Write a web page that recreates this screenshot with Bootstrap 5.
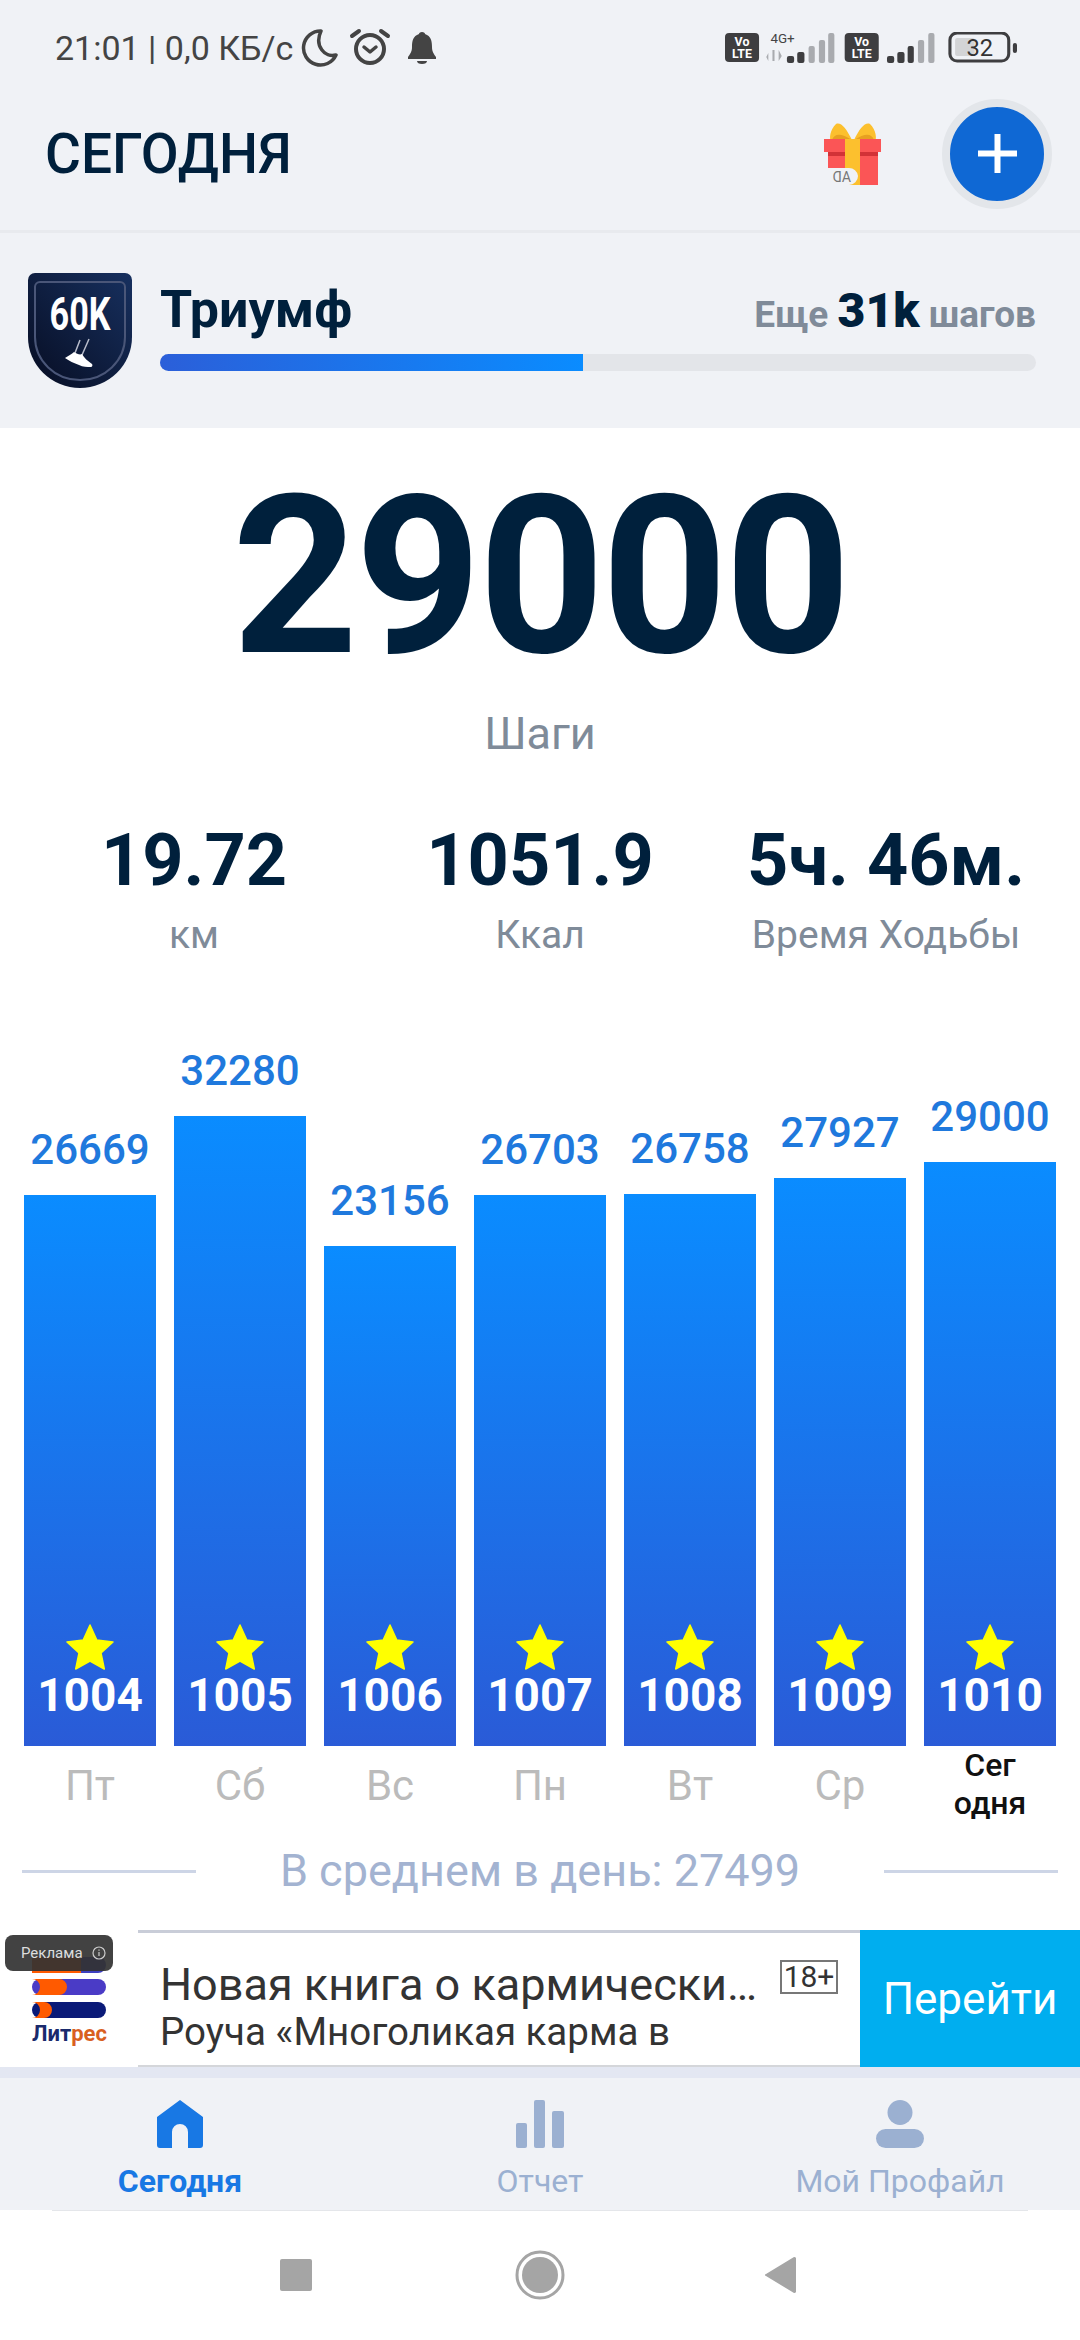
<!DOCTYPE html>
<html lang="ru">
<head>
    <meta charset="UTF-8">
    <meta name="viewport" content="width=device-width, initial-scale=1.0">
    <title>Шаги</title>
    <link href="https://cdn.jsdelivr.net/npm/bootstrap@5.3.0/dist/css/bootstrap.min.css" rel="stylesheet">
    <style>
        html, body { margin: 0; height: 2340px; overflow: hidden; }
        body { width: 1080px; background: #fff; font-family: Roboto, "Liberation Sans", sans-serif; color: #00203c; }
        svg { display: block; }

        .status-bar { height: 80px; background: #f0f2f6; padding: 26px 63px 0 55px; }
        .status-time { font-size: 34px; line-height: 44px; color: #444; white-space: nowrap; }
        .app-head { height: 153px; background: #f0f2f6; border-bottom: 3px solid #e8eaee; padding: 0 28px 3px 45px; }
        .app-title { font-size: 55px; font-weight: 500; margin: 0; line-height: 1.2; }
        .add-btn { width: 110px; height: 110px; border-radius: 50%; background: #0f68d4; border: 8px solid #e3e6ea; padding: 0; }

        .goal-box { height: 195px; background: #f0f2f6; padding: 40px 44px 0 28px; }
        .goal-name { font-size: 52px; font-weight: 700; line-height: 60px; }
        .goal-left { font-size: 37px; font-weight: 700; color: #808b99; line-height: 60px; }
        .goal-left b { font-size: 48px; color: #00203c; }
        .goal-track { height: 17px; border-radius: 9px; background: #e3e5e9; margin-top: 9px; overflow: hidden; }
        .goal-fill { height: 100%; background: linear-gradient(90deg, #2b5fd9, #0a8cff); }

        .main-area { height: 1502px; background: #fff; }
        .big-steps { font-size: 220px; font-weight: 700; line-height: 260px; text-align: center; padding-top: 19px; letter-spacing: -3px; }
        .steps-cap { font-size: 45px; color: #7f8b99; text-align: center; line-height: 54px; }
        .stat-row { margin-top: 58px; }
        .stat-item { text-align: center; }
        .stat-val { font-size: 72px; font-weight: 700; line-height: 84px; white-space: nowrap; }
        .stat-cap { font-size: 39px; color: #7f8b99; line-height: 46px; margin-top: 9px; white-space: nowrap; }

        .chart-row { height: 788px; padding: 0 24px; gap: 18px; }
        .chart-col { width: 132px; }
        .bar-num { font-size: 42px; font-weight: 500; color: #1f79dd; line-height: 50px; text-align: center; margin-bottom: 20px; }
        .bar-fill { background: linear-gradient(180deg, #0a8cff, #2a5bd7); padding-bottom: 26px; }
        .bar-id { font-size: 46px; font-weight: 700; color: #fff; line-height: 50px; text-align: center; }
        .day-row { height: 80px; padding: 0 24px; gap: 18px; }
        .day-name { width: 132px; font-size: 42px; color: #bbb; text-align: center; line-height: 50px; padding-top: 15px; }
        .day-name.now { font-size: 32px; font-weight: 500; color: #111; line-height: 38px; padding-top: 0; }

        .avg-row { padding: 0 22px; margin-top: 20px; }
        .avg-line { height: 3px; width: 174px; background: #cdd5e6; }
        .avg-text { font-size: 45px; color: #a3b3d1; line-height: 50px; }

        .ad-box { height: 137px; background: #fff; position: relative; }
        .ad-logo { width: 138px; flex: none; padding: 27px 0 0 32px; }
        .ad-body { border-top: 3px solid #c9cdd8; border-bottom: 2px solid #d4d6da; padding: 28px 0 0 22px; min-width: 0; }
        .ad-title { font-size: 45px; line-height: 48px; color: #333; white-space: nowrap; }
        .ad-sub { font-size: 38.500px; line-height: 44px; margin-top: 1px; color: #333; white-space: nowrap; }
        .ad-age { position: absolute; left: 780px; top: 30px; width: 58px; height: 34px; border: 2px solid #777; font-size: 30px; line-height: 30px; text-align: center; color: #333; }
        .ad-go { width: 220px; flex: none; background: #00aeef; color: #fff; font-size: 44px; border: 0; border-radius: 0; padding: 0; }
        .ad-go:hover { background: #00aeef; color: #fff; }
        .ad-tag { position: absolute; left: 5px; top: 5px; width: 108px; height: 36px; border-radius: 8px; background: rgba(50,50,50,.92); color: #ddd; font-size: 15px; padding: 0 0 0 16px; gap: 9px; }

        .tab-band { height: 11px; background: #e3e7f2; }
        .tab-bar { height: 132px; background: #f0f2f6; padding-top: 22px; }
        .tab-item { color: #9bb0d1; text-align: center; font-size: 32px; line-height: 36px; }
        .tab-item svg { margin: 0 auto 15px; }
        .tab-item.on { color: #1878e4; font-weight: 700; }
        .tab-rule { height: 1px; background: #e4e6ea; margin: 0 52px; }
        .sys-nav { height: 129px; background: #fff; padding-bottom: 1px; }
    </style>
</head>
<body>

    <div class="status-bar d-flex justify-content-between">
        <div class="d-flex align-items-start">
            <span class="status-time">21:01 | 0,0 КБ/с</span>
            <svg class="ms-2" width="137" height="44" viewBox="0 0 137 44" fill="none">
                <path d="M20 5a17 17 0 1 0 15 24c-11 3-22-9-15-24z" stroke="#444" stroke-width="3.500" stroke-linejoin="round"/>
                <circle cx="69" cy="23" r="14" stroke="#444" stroke-width="4"/>
                <path d="M51 10l7-5M87 10l-7-5" stroke="#444" stroke-width="4" stroke-linecap="round"/>
                <path d="M63 21l6 5 6-5" stroke="#444" stroke-width="3.500" stroke-linecap="round" stroke-linejoin="round"/>
                <path d="M121 6c2 0 3 1 3 2 6 2 7 7 7 13 0 5 2 7 4 10v2h-28v-2c2-3 4-5 4-10 0-6 1-11 7-13 0-1 1-2 3-2z" fill="#444"/>
                <path d="M116 35h10c0 2-2 3-5 3s-5-1-5-3z" fill="#444"/>
            </svg>
        </div>
        <svg width="292" height="36" viewBox="0 0 283 36" preserveAspectRatio="none" style="margin-top:6px">
            <rect x="0" y="1" width="33" height="29" rx="4" fill="#3e3e40"/>
            <text x="16.500" y="14" font-size="12" font-weight="700" fill="#fff" text-anchor="middle" font-family="Roboto">Vo</text>
            <text x="16.500" y="26" font-size="12" font-weight="700" fill="#fff" text-anchor="middle" font-family="Roboto">LTE</text>
            <text x="44" y="11" font-size="13" fill="#444" font-family="Roboto">4G+</text>
            <path d="M42 21l-2 4 2 4zM46 18v11h2v-11zM52 18v11l3-5z" fill="#a9abaf"/>
            <rect x="60" y="24" width="7" height="7" rx="2" fill="#3e3e40"/>
            <rect x="70" y="20" width="7" height="11" rx="2" fill="#3e3e40"/>
            <rect x="81" y="14" width="6" height="17" rx="2" fill="#a9abaf"/>
            <rect x="91" y="8" width="6" height="23" rx="2" fill="#a9abaf"/>
            <rect x="100" y="1" width="6" height="30" rx="2" fill="#a9abaf"/>
            <rect x="116" y="1" width="33" height="29" rx="4" fill="#3e3e40"/>
            <text x="132.500" y="14" font-size="12" font-weight="700" fill="#fff" text-anchor="middle" font-family="Roboto">Vo</text>
            <text x="132.500" y="26" font-size="12" font-weight="700" fill="#fff" text-anchor="middle" font-family="Roboto">LTE</text>
            <rect x="157" y="24" width="7" height="7" rx="2" fill="#3e3e40"/>
            <rect x="167" y="20" width="7" height="11" rx="2" fill="#3e3e40"/>
            <rect x="177" y="14" width="6" height="17" rx="2" fill="#3e3e40"/>
            <rect x="187" y="8" width="6" height="23" rx="2" fill="#a9abaf"/>
            <rect x="197" y="1" width="6" height="30" rx="2" fill="#a9abaf"/>
            <rect x="218" y="1" width="57" height="28" rx="7" fill="none" stroke="#3e3e40" stroke-width="3"/>
            <rect x="223" y="6" width="19" height="18" rx="2" fill="#d3d4d6"/>
            <text x="247" y="24" font-size="23" fill="#333" text-anchor="middle" font-family="Roboto">32</text>
            <rect x="279" y="11" width="4" height="10" rx="2" fill="#3e3e40"/>
        </svg>
    </div>

    <div class="app-head d-flex align-items-center justify-content-between">
        <h1 class="app-title">СЕГОДНЯ</h1>
        <div class="d-flex align-items-center">
            <svg width="58" height="64" viewBox="0 0 58 64" style="margin-right:60px">
                <path d="M28 18C22 6 17 0 12 2 6 8 5 16 7 20h21zM30 18C36 6 41 0 46 2c6 6 7 14 5 18H30z" fill="#fcc02e"/>
                <path d="M8 18c2-6 8-8 20 0zM50 18c-2-6-8-8-20 0z" fill="#e7a021"/>
                <path d="M0 17h57v13H0z" fill="#fb5556"/>
                <path d="M4 30h50v33H4z" fill="#fb5556"/>
                <path d="M4 30h50v4H4z" fill="#d23237"/>
                <path d="M21 17h15v46H21z" fill="#fcc02e"/>
                <path d="M4 46h21a9 9 0 0 1 9 8 9 9 0 0 1-9 9H4z" fill="#f0f2f6"/>
                <text transform="translate(27 60) scale(-1 1)" font-size="14" fill="#777" font-family="Roboto">AD</text>
            </svg>
            <button class="btn add-btn d-flex align-items-center justify-content-center" type="button">
                <svg width="39" height="39" viewBox="0 0 39 39"><path d="M19.500 0v39M0 19.500h39" stroke="#fff" stroke-width="6"/></svg>
            </button>
        </div>
    </div>

    <div class="goal-box d-flex">
        <svg width="104" height="115" viewBox="0 0 104 115" class="flex-shrink-0">
            <defs>
                <linearGradient id="shield" x1="1" y1="0" x2="0" y2="1">
                    <stop offset="0" stop-color="#17305f"/>
                    <stop offset="1" stop-color="#070d22"/>
                </linearGradient>
            </defs>
            <path d="M7 0h90a7 7 0 0 1 7 7v57a52 51 0 0 1-104 0V7a7 7 0 0 1 7-7z" fill="url(#shield)"/>
            <path d="M12 9h80a5 5 0 0 1 5 5v50a45 43 0 0 1-90 0V14a5 5 0 0 1 5-5z" fill="none" stroke="#4a5678" stroke-width="2"/>
            <text x="52" y="57" font-size="47" font-weight="700" fill="#fff" text-anchor="middle" font-family="Roboto" textLength="61" lengthAdjust="spacingAndGlyphs">60K</text>
            <path d="M52 67l-5 13M61 66l-7 16" stroke="#b8bccb" stroke-width="1.500" fill="none"/>
            <path d="M37 85c3-2 7-4 9-6 3 2 6 3 8 2 2 4 6 7 10 10 1 1 0 3-1 3-4 0-8 0-12-2-5-2-10-4-14-7z" fill="#fff"/>
        </svg>
        <div class="flex-grow-1" style="margin-left:28px;padding-top:7px">
            <div class="d-flex justify-content-between align-items-baseline">
                <span class="goal-name">Триумф</span>
                <span class="goal-left">Еще <b>31k</b> шагов</span>
            </div>
            <div class="goal-track"><div class="goal-fill" style="width:48.3%"></div></div>
        </div>
    </div>

    <div class="main-area">
        <div class="big-steps">29000</div>
        <div class="steps-cap">Шаги</div>
        <div class="stat-row d-flex">
            <div class="stat-item" style="width:388px"><div class="stat-val">19.72</div><div class="stat-cap">км</div></div>
            <div class="stat-item" style="width:304px"><div class="stat-val">1051.9</div><div class="stat-cap">Ккал</div></div>
            <div class="stat-item" style="width:388px"><div class="stat-val">5ч. 46м.</div><div class="stat-cap">Время Ходьбы</div></div>
        </div>

        <div class="chart-row d-flex align-items-end">
            <div class="chart-col"><div class="bar-num">26669</div><div class="bar-fill d-flex flex-column justify-content-end align-items-center" style="height:551px"><svg width="48" height="46" viewBox="0 0 48 46"><path d="M24 1l6.800 15 16.200 2-12 11 3.300 16L24 37 9.700 45 13 29 1 18l16.200-2z" fill="#ff0" stroke="#ff0" stroke-linejoin="round" stroke-width="1.500"/></svg><div class="bar-id">1004</div></div></div>
            <div class="chart-col"><div class="bar-num">32280</div><div class="bar-fill d-flex flex-column justify-content-end align-items-center" style="height:630px"><svg width="48" height="46" viewBox="0 0 48 46"><path d="M24 1l6.800 15 16.200 2-12 11 3.300 16L24 37 9.700 45 13 29 1 18l16.200-2z" fill="#ff0" stroke="#ff0" stroke-linejoin="round" stroke-width="1.500"/></svg><div class="bar-id">1005</div></div></div>
            <div class="chart-col"><div class="bar-num">23156</div><div class="bar-fill d-flex flex-column justify-content-end align-items-center" style="height:500px"><svg width="48" height="46" viewBox="0 0 48 46"><path d="M24 1l6.800 15 16.200 2-12 11 3.300 16L24 37 9.700 45 13 29 1 18l16.200-2z" fill="#ff0" stroke="#ff0" stroke-linejoin="round" stroke-width="1.500"/></svg><div class="bar-id">1006</div></div></div>
            <div class="chart-col"><div class="bar-num">26703</div><div class="bar-fill d-flex flex-column justify-content-end align-items-center" style="height:551px"><svg width="48" height="46" viewBox="0 0 48 46"><path d="M24 1l6.800 15 16.200 2-12 11 3.300 16L24 37 9.700 45 13 29 1 18l16.200-2z" fill="#ff0" stroke="#ff0" stroke-linejoin="round" stroke-width="1.500"/></svg><div class="bar-id">1007</div></div></div>
            <div class="chart-col"><div class="bar-num">26758</div><div class="bar-fill d-flex flex-column justify-content-end align-items-center" style="height:552px"><svg width="48" height="46" viewBox="0 0 48 46"><path d="M24 1l6.800 15 16.200 2-12 11 3.300 16L24 37 9.700 45 13 29 1 18l16.200-2z" fill="#ff0" stroke="#ff0" stroke-linejoin="round" stroke-width="1.500"/></svg><div class="bar-id">1008</div></div></div>
            <div class="chart-col"><div class="bar-num">27927</div><div class="bar-fill d-flex flex-column justify-content-end align-items-center" style="height:568px"><svg width="48" height="46" viewBox="0 0 48 46"><path d="M24 1l6.800 15 16.200 2-12 11 3.300 16L24 37 9.700 45 13 29 1 18l16.200-2z" fill="#ff0" stroke="#ff0" stroke-linejoin="round" stroke-width="1.500"/></svg><div class="bar-id">1009</div></div></div>
            <div class="chart-col"><div class="bar-num">29000</div><div class="bar-fill d-flex flex-column justify-content-end align-items-center" style="height:584px"><svg width="48" height="46" viewBox="0 0 48 46"><path d="M24 1l6.800 15 16.200 2-12 11 3.300 16L24 37 9.700 45 13 29 1 18l16.200-2z" fill="#ff0" stroke="#ff0" stroke-linejoin="round" stroke-width="1.500"/></svg><div class="bar-id">1010</div></div></div>
        </div>
        <div class="day-row d-flex">
            <div class="day-name">Пт</div>
            <div class="day-name">Сб</div>
            <div class="day-name">Вс</div>
            <div class="day-name">Пн</div>
            <div class="day-name">Вт</div>
            <div class="day-name">Ср</div>
            <div class="day-name now">Сег<br>одня</div>
        </div>
        <div class="avg-row d-flex align-items-center justify-content-between">
            <div class="avg-line"></div>
            <div class="avg-text">В среднем в день: 27499</div>
            <div class="avg-line"></div>
        </div>
    </div>

    <div class="ad-box d-flex">
        <div class="ad-logo">
            <svg width="76" height="92" viewBox="0 0 76 92">
                <rect x="0" y="0" width="74" height="16" rx="8" fill="#3d3fc0"/>
                <rect x="0" y="0" width="49" height="16" fill="#ff5a00"/>
                <rect x="0" y="22" width="74" height="16" rx="8" fill="#4a3bc6"/>
                <path d="M0 22h27a8 8 0 0 1 0 16H0a8 8 0 0 0 0-16z" fill="#ff5a00"/>
                <rect x="0" y="45" width="74" height="16" rx="8" fill="#0a1a78"/>
                <path d="M0 45h12a8 8 0 0 1 0 16H0a8 8 0 0 0 0-16z" fill="#ff5a00"/>
                <text x="0" y="84" font-size="22" font-weight="700" font-family="Roboto" fill="#1a2a6c">Лит<tspan fill="#d9601f">рес</tspan></text>
            </svg>
        </div>
        <div class="ad-body flex-grow-1">
            <div class="ad-title">Новая книга о кармически…</div>
            <div class="ad-sub">Роуча «Многоликая карма в</div>
        </div>
        <button class="btn ad-go" type="button">Перейти</button>
        <div class="ad-age">18+</div>
        <div class="ad-tag d-flex align-items-center">
            <span>Реклама</span>
            <svg width="14" height="14" viewBox="0 0 14 14" fill="none"><circle cx="7" cy="7" r="6" stroke="#ccc" stroke-width="1.200"/><path d="M7 6v4M7 3.500v1.200" stroke="#ccc" stroke-width="1.200"/></svg>
        </div>
    </div>

    <div class="tab-band"></div>
    <div class="tab-bar row g-0">
        <div class="tab-item on col-4">
            <svg width="46" height="48" viewBox="0 0 46 48"><path d="M23 0L46 17v28a3 3 0 0 1-3 3H31V32a8 8 0 0 0-16 0v16H3a3 3 0 0 1-3-3V17z" fill="#1878e4"/></svg>
            Сегодня
        </div>
        <div class="tab-item col-4">
            <svg width="48" height="48" viewBox="0 0 48 48" fill="#9bb0d1"><rect x="0" y="23" width="11" height="25" rx="2"/><rect x="18" y="0" width="11" height="48" rx="2"/><rect x="36" y="11" width="12" height="37" rx="2"/></svg>
            Отчет
        </div>
        <div class="tab-item col-4">
            <svg width="48" height="48" viewBox="0 0 48 48" fill="#9bb0d1"><circle cx="24" cy="12.500" r="12.500"/><rect x="0" y="29" width="48" height="19" rx="9.500"/></svg>
            Мой Профайл
        </div>
    </div>
    <div class="tab-rule"></div>

    <div class="sys-nav d-flex justify-content-center align-items-center">
        <svg width="520" height="50" viewBox="0 0 520 50">
            <rect x="0" y="9" width="32" height="32" rx="2" fill="#a5a5a5"/>
            <circle cx="260" cy="25" r="23" fill="none" stroke="#a5a5a5" stroke-width="3"/>
            <circle cx="260" cy="25" r="18" fill="#a5a5a5"/>
            <path d="M516 8v34a2 2 0 0 1-2 1l-28-17a1 1 0 0 1 0-2l28-17a2 2 0 0 1 2 1z" fill="#a5a5a5"/>
        </svg>
    </div>

    <script src="https://cdn.jsdelivr.net/npm/bootstrap@5.3.0/dist/js/bootstrap.bundle.min.js"></script>
</body>
</html>
